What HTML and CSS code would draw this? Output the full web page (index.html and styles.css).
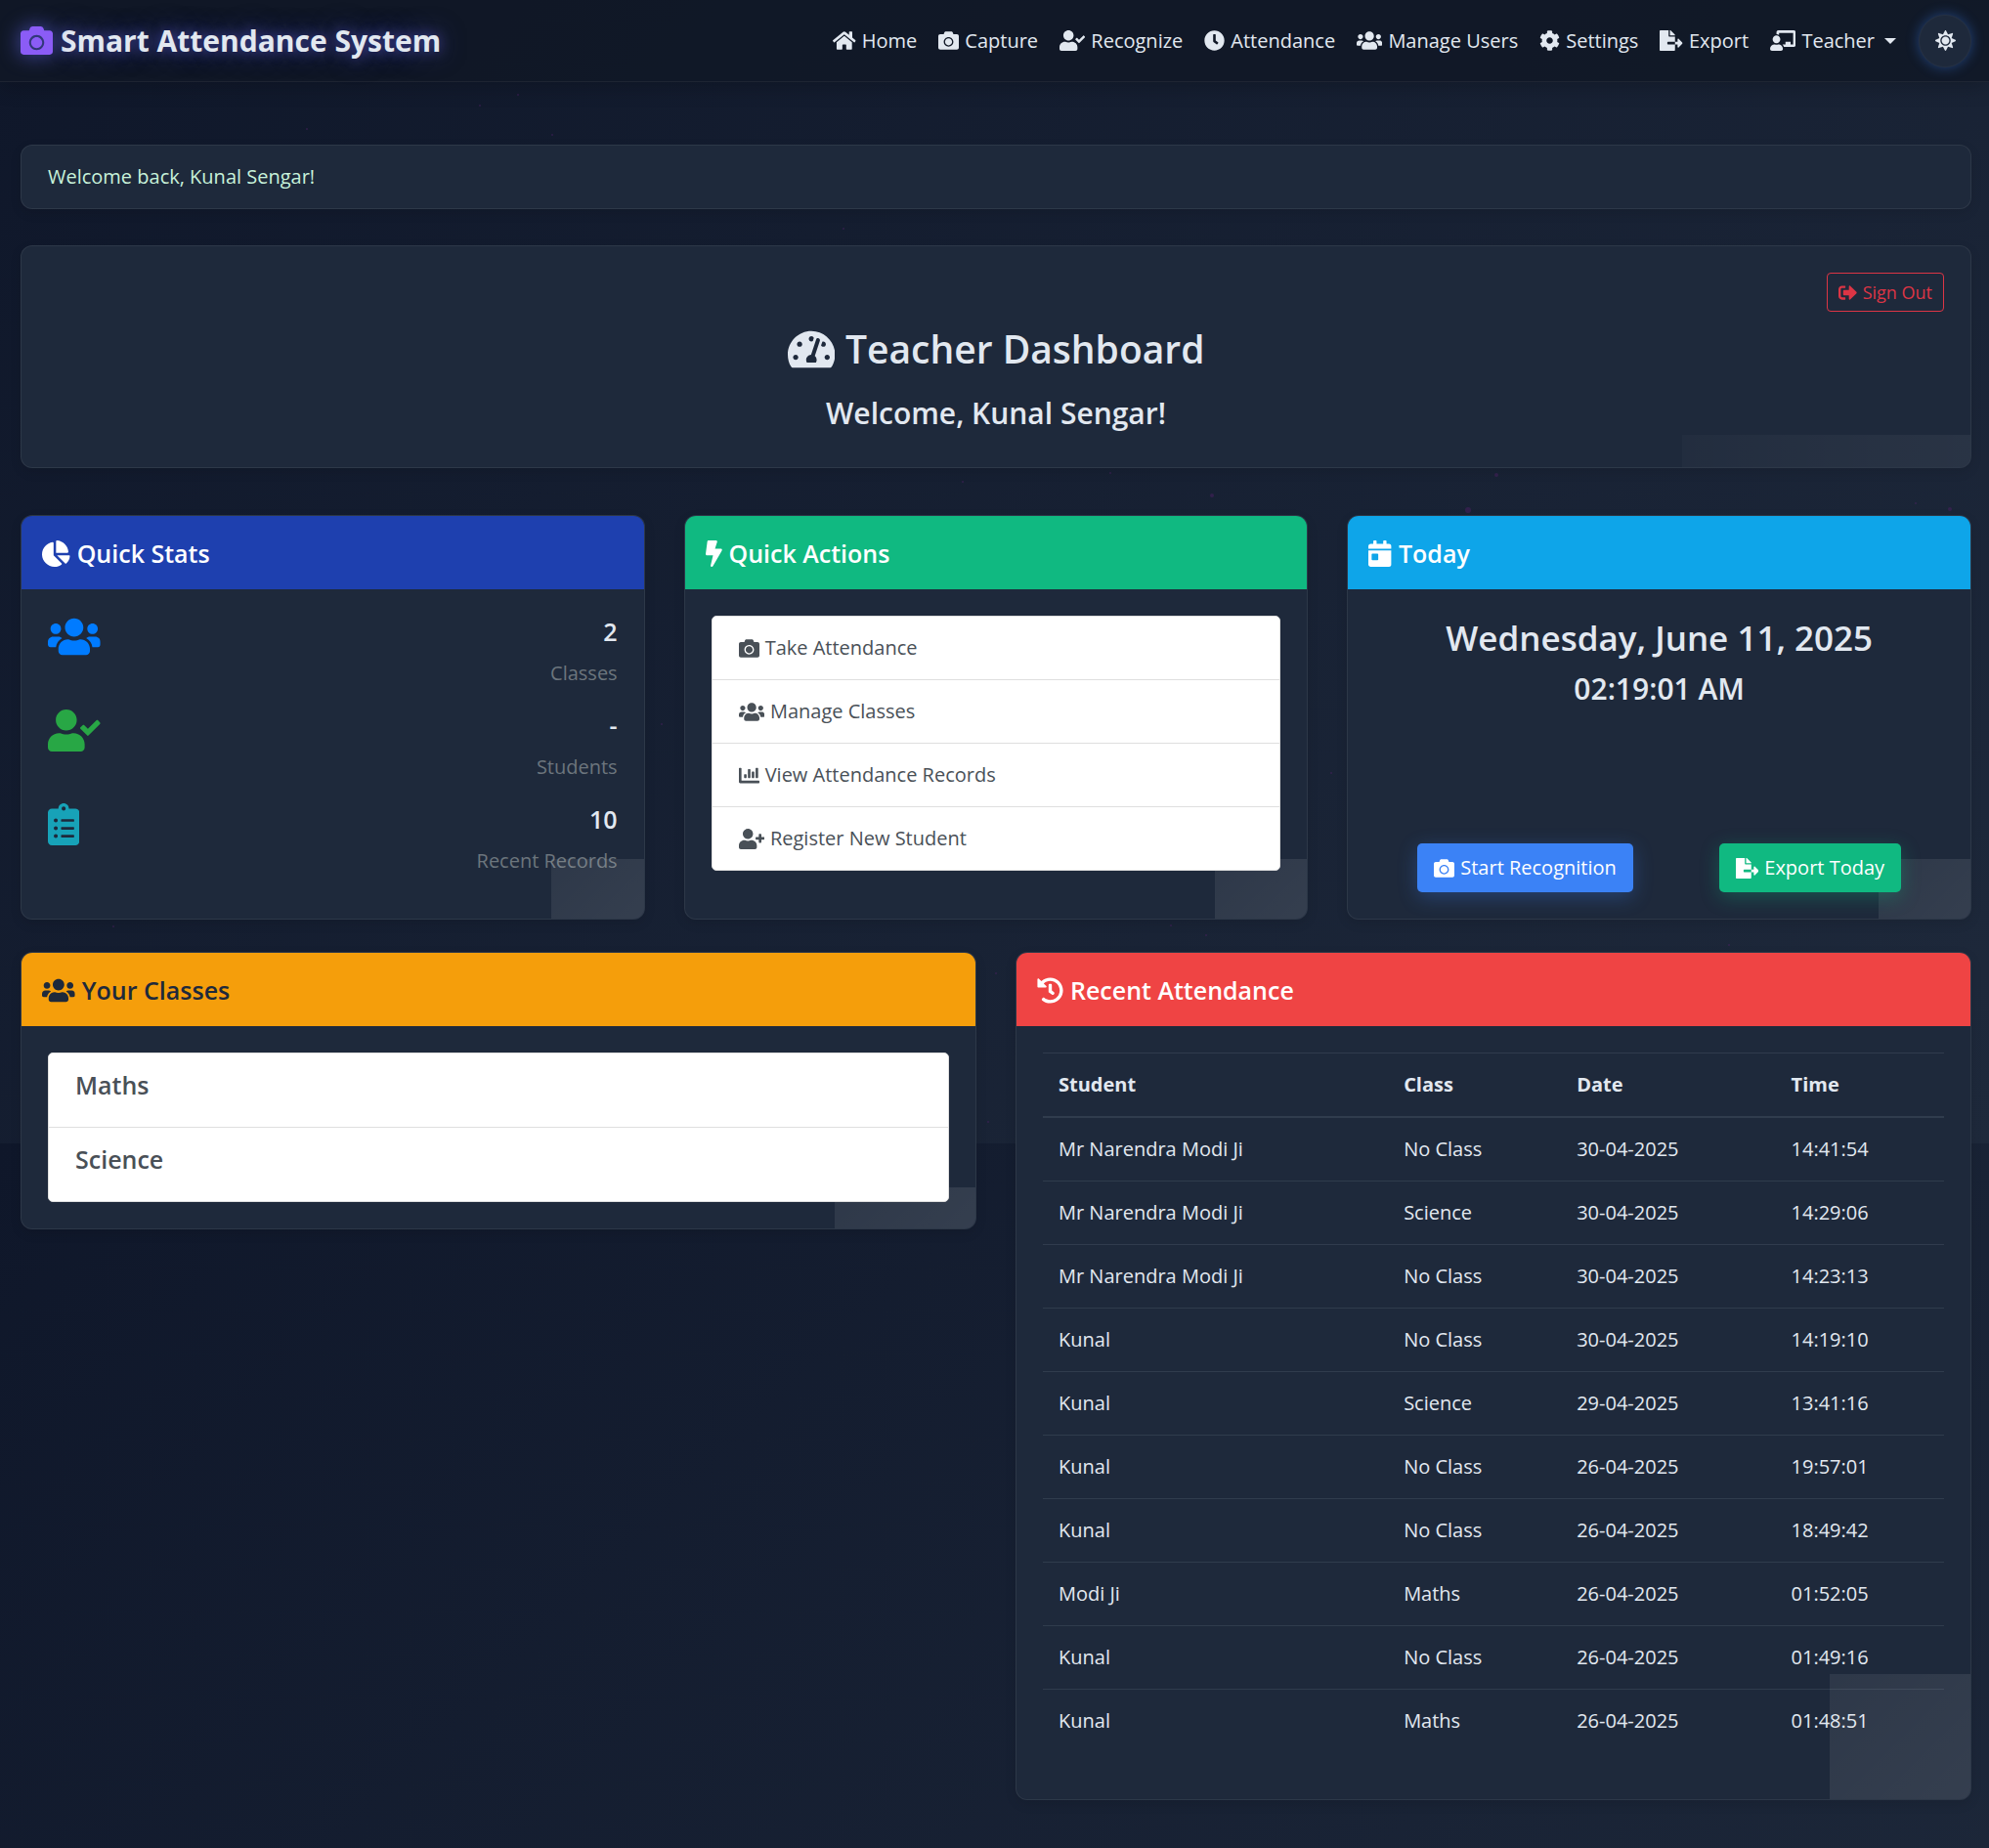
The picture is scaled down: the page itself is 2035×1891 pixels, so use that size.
FILE: index.html
```html
<!DOCTYPE html>
<html lang="en">
<head>
<meta charset="utf-8">
<meta name="viewport" content="width=device-width, initial-scale=1">
<title>Smart Attendance System</title>
<link rel="stylesheet" href="styles.css">
</head>
<body>
<svg class="sprite" aria-hidden="true">
  <symbol id="camera" viewBox="0 0 512 512"><path d="M512 144v288c0 26.5-21.5 48-48 48H48c-26.5 0-48-21.5-48-48V144c0-26.5 21.5-48 48-48h88l12.3-32.9c7-18.7 24.9-31.1 44.9-31.1h125.5c20 0 37.9 12.4 44.9 31.1L376 96h88c26.5 0 48 21.5 48 48zM376 288c0-66.2-53.8-120-120-120s-120 53.8-120 120 53.8 120 120 120 120-53.8 120-120zm-32 0c0 48.5-39.5 88-88 88s-88-39.5-88-88 39.5-88 88-88 88 39.5 88 88z"/></symbol>
  <symbol id="home" viewBox="0 0 576 512"><path d="M280.37 148.26L96 300.11V464a16 16 0 0 0 16 16l112.06-.29a16 16 0 0 0 15.92-16V368a16 16 0 0 1 16-16h64a16 16 0 0 1 16 16v95.64a16 16 0 0 0 16 16.05L464 480a16 16 0 0 0 16-16V300L295.67 148.26a12.19 12.19 0 0 0-15.3 0zM571.6 251.47L488 182.56V44.05a12 12 0 0 0-12-12h-56a12 12 0 0 0-12 12v72.61L318.47 43a48 48 0 0 0-61 0L4.34 251.47a12 12 0 0 0-1.6 16.9l25.5 31A12 12 0 0 0 45.15 301l235.22-193.74a12.19 12.19 0 0 1 15.3 0L530.9 301a12 12 0 0 0 16.9-1.6l25.5-31a12 12 0 0 0-1.7-16.93z"/></symbol>
  <symbol id="user-check" viewBox="0 0 640 512"><path d="M224 256c70.7 0 128-57.3 128-128S294.7 0 224 0 96 57.3 96 128s57.3 128 128 128zm89.6 32h-16.7c-22.2 10.2-46.9 16-72.9 16s-50.6-5.8-72.9-16h-16.7C60.2 288 0 348.2 0 422.4V464c0 26.5 21.5 48 48 48h352c26.5 0 48-21.5 48-48v-41.6c0-74.2-60.2-134.4-134.4-134.4zm323-128.4l-27.8-28.1c-4.6-4.7-12.1-4.7-16.8-.1l-104.8 104-45.5-45.8c-4.6-4.7-12.1-4.7-16.8-.1l-28.1 27.9c-4.7 4.6-4.7 12.1-.1 16.8l81.7 82.3c4.6 4.7 12.1 4.7 16.8.1l141.3-140.2c4.6-4.7 4.7-12.2.1-16.8z"/></symbol>
  <symbol id="clock" viewBox="0 0 512 512"><path d="M256,8C119,8,8,119,8,256S119,504,256,504,504,393,504,256,393,8,256,8Zm92.49,313h0l-20,25a16,16,0,0,1-22.49,2.5h0l-67-49.72a40,40,0,0,1-15-31.23V112a16,16,0,0,1,16-16h32a16,16,0,0,1,16,16V256l58,42.5A16,16,0,0,1,348.49,321Z"/></symbol>
  <symbol id="users" viewBox="0 0 640 512"><path d="M96 224c35.3 0 64-28.7 64-64s-28.7-64-64-64-64 28.7-64 64 28.7 64 64 64zm448 0c35.3 0 64-28.7 64-64s-28.7-64-64-64-64 28.7-64 64 28.7 64 64 64zm32 32h-64c-17.6 0-33.5 7.1-45.1 18.6 40.3 22.1 68.9 62 75.1 109.4h66c17.7 0 32-14.3 32-32v-32c0-35.3-28.7-64-64-64zm-256 0c61.9 0 112-50.1 112-112S381.9 32 320 32 208 82.1 208 144s50.1 112 112 112zm76.8 32h-8.3c-20.8 10-43.9 16-68.5 16s-47.6-6-68.5-16h-8.3C179.6 288 128 339.6 128 403.2V432c0 26.5 21.5 48 48 48h288c26.5 0 48-21.5 48-48v-28.8c0-63.6-51.6-115.2-115.2-115.2zm-223.7-13.4C161.5 263.1 145.6 256 128 256H64c-35.3 0-64 28.7-64 64v32c0 17.7 14.3 32 32 32h65.9c6.3-47.4 34.9-87.3 75.2-109.4z"/></symbol>
  <symbol id="cog" viewBox="0 0 512 512"><path d="M487.4 315.7l-42.6-24.6c4.3-23.2 4.3-47 0-70.2l42.6-24.6c4.9-2.8 7.1-8.6 5.5-14-11.1-35.6-30-67.8-54.7-94.6-3.8-4.1-10-5.1-14.8-2.3L380.8 110c-17.9-15.4-38.5-27.3-60.8-35.1V25.8c0-5.6-3.9-10.5-9.4-11.7-36.7-8.2-74.3-7.8-109.2 0-5.5 1.2-9.4 6.1-9.4 11.7V75c-22.2 7.9-42.8 19.8-60.8 35.1L88.7 85.5c-4.9-2.8-11-1.9-14.8 2.3-24.7 26.7-43.6 58.9-54.7 94.6-1.7 5.4.6 11.2 5.5 14L67.3 221c-4.3 23.2-4.3 47 0 70.2l-42.6 24.6c-4.9 2.8-7.1 8.6-5.5 14 11.1 35.6 30 67.8 54.7 94.6 3.8 4.1 10 5.1 14.8 2.3l42.6-24.6c17.9 15.4 38.5 27.3 60.8 35.1v49.2c0 5.6 3.9 10.5 9.4 11.7 36.7 8.2 74.3 7.8 109.2 0 5.5-1.2 9.4-6.1 9.4-11.7v-49.2c22.2-7.9 42.8-19.8 60.8-35.1l42.6 24.6c4.9 2.8 11 1.9 14.8-2.3 24.7-26.7 43.6-58.9 54.7-94.6 1.5-5.5-.7-11.3-5.6-14.1zM256 336c-44.1 0-80-35.9-80-80s35.9-80 80-80 80 35.9 80 80-35.9 80-80 80z"/></symbol>
  <symbol id="export" viewBox="0 0 576 512"><path d="M384 121.9c0-6.3-2.5-12.4-7-16.9L279.1 7c-4.5-4.5-10.6-7-17-7H256v128h128zM571 308l-95.7-96.4c-10.1-10.1-27.4-3-27.4 11.3V288h-64v64h64v65.2c0 14.3 17.3 21.4 27.4 11.3L571 332c6.6-6.6 6.6-17.4 0-24zm-379 28v-32c0-8.8 7.2-16 16-16h176V160H248c-13.2 0-24-10.8-24-24V0H24C10.7 0 0 10.7 0 24v464c0 13.3 10.7 24 24 24h336c13.3 0 24-10.7 24-24V352H208c-8.8 0-16-7.2-16-16z"/></symbol>
  <symbol id="teacher" viewBox="0 0 640 512"><path d="M208 352c-2.39 0-4.78.35-7.06 1.09C187.98 357.3 174.35 360 160 360c-14.35 0-27.98-2.7-40.95-6.91-2.28-.74-4.66-1.09-7.05-1.09C49.94 352-.33 402.48 0 464.62.14 490.88 21.73 512 48 512h224c26.27 0 47.86-21.12 48-47.38.33-62.14-49.94-112.62-112-112.62zm-48-32c53.02 0 96-42.98 96-96s-42.98-96-96-96-96 42.98-96 96 42.98 96 96 96zM592 0H208c-26.47 0-48 22.25-48 49.59V96c23.42 0 45.1 6.78 64 17.8V64h352v288h-64v-64H384v64h-76.24c19.1 16.69 33.12 38.73 39.69 64H592c26.47 0 48-22.25 48-49.59V49.59C640 22.25 618.47 0 592 0z"/></symbol>
  <symbol id="sun" viewBox="0 0 512 512"><path d="M256 160c-52.9 0-96 43.1-96 96s43.1 96 96 96 96-43.1 96-96-43.1-96-96-96zm246.4 80.5l-94.7-47.3 33.5-100.4c4.5-13.6-8.4-26.5-21.9-21.9l-100.4 33.5-47.4-94.8c-6.4-12.8-24.6-12.8-31 0l-47.3 94.7L92.7 70.8c-13.6-4.5-26.5 8.4-21.9 21.9l33.5 100.4-94.7 47.4c-12.8 6.4-12.8 24.6 0 31l94.7 47.3-33.5 100.5c-4.5 13.6 8.4 26.5 21.9 21.9l100.4-33.5 47.3 94.7c6.4 12.8 24.6 12.8 31 0l47.3-94.7 100.4 33.5c13.6 4.5 26.5-8.4 21.9-21.9l-33.5-100.4 94.7-47.3c13-6.5 13-24.7.2-31.1zm-155.9 106c-49.9 49.9-131.1 49.9-181 0-49.9-49.9-49.9-131.1 0-181 49.9-49.9 131.1-49.9 181 0 49.9 49.9 49.9 131.1 0 181z"/></symbol>
  <symbol id="gauge" viewBox="0 0 576 512"><path d="M288 32C128.94 32 0 160.94 0 320c0 52.8 14.25 102.26 39.06 144.8 5.61 9.62 16.3 15.2 27.44 15.2h443c11.14 0 21.83-5.58 27.44-15.2C561.75 422.26 576 372.8 576 320c0-159.06-128.94-288-288-288zm0 64c14.71 0 26.58 10.13 30.32 23.65-1.11 2.26-2.64 4.23-3.45 6.67l-9.22 27.67c-5.13 3.49-10.97 6.01-17.64 6.01-17.67 0-32-14.33-32-32S270.33 96 288 96zM96 384c-17.67 0-32-14.33-32-32s14.33-32 32-32 32 14.33 32 32-14.33 32-32 32zm48-160c-17.67 0-32-14.33-32-32s14.33-32 32-32 32 14.33 32 32-14.33 32-32 32zm246.77-72.41l-61.33 184C343.13 347.33 352 364.54 352 384c0 11.72-3.38 22.55-8.88 32H232.88c-5.5-9.45-8.88-20.28-8.88-32 0-33.94 26.5-61.43 59.9-63.59l61.34-184.01c4.17-12.56 17.73-19.45 30.36-15.17 12.57 4.19 19.35 17.79 15.17 30.36zm14.66 57.2l15.52-46.55c3.47-1.29 7.13-2.23 11.05-2.23 17.67 0 32 14.33 32 32s-14.33 32-32 32c-11.38-.01-20.89-6.28-26.57-15.22zM480 384c-17.67 0-32-14.33-32-32s14.33-32 32-32 32 14.33 32 32-14.33 32-32 32z"/></symbol>
  <symbol id="sign-out" viewBox="0 0 512 512"><path d="M497 273L329 441c-15 15-41 4.5-41-17v-96H152c-13.3 0-24-10.7-24-24v-96c0-13.3 10.7-24 24-24h136V88c0-21.4 25.9-32 41-17l168 168c9.3 9.4 9.3 24.6 0 34zM192 436v-40c0-6.6-5.4-12-12-12H96c-17.7 0-32-14.3-32-32V160c0-17.7 14.3-32 32-32h84c6.6 0 12-5.4 12-12V76c0-6.6-5.4-12-12-12H96c-53 0-96 43-96 96v192c0 53 43 96 96 96h84c6.6 0 12-5.4 12-12z"/></symbol>
  <symbol id="pie" viewBox="0 0 544 512"><path d="M527.79 288H290.5l158.03 158.03c6.04 6.04 15.98 6.53 22.19.68 38.7-36.46 65.32-85.61 73.13-140.86 1.34-9.46-6.51-17.85-16.06-17.85zm-15.83-64.8C503.72 103.74 408.26 8.28 288.8.04 279.68-.59 272 7.1 272 16.24V240h223.77c9.14 0 16.82-7.68 16.19-16.8zM224 288V50.71c0-9.55-8.39-17.4-17.84-16.06C86.99 51.49-4.1 155.6.14 280.37 4.5 408.51 114.83 513.59 243.03 511.98c50.4-.63 96.97-16.87 135.26-44.03 7.9-5.6 8.42-17.23 1.57-24.08L224 288z"/></symbol>
  <symbol id="bolt" viewBox="0 0 320 512"><path d="M296 160H180.6l42.6-129.8C227.2 15 215.7 0 200 0H56C44 0 33.8 8.9 32.2 20.8l-32 240C-1.7 275.2 9.5 288 24 288h118.7L96.6 482.5c-3.6 15.2 8 29.5 23.3 29.5 8.4 0 16.4-4.4 20.8-12l176-304c9.3-15.9-2.2-36-20.7-36z"/></symbol>
  <symbol id="calendar" viewBox="0 0 448 512"><path d="M0 464c0 26.5 21.5 48 48 48h352c26.5 0 48-21.5 48-48V192H0v272zm64-192c0-8.8 7.2-16 16-16h96c8.8 0 16 7.2 16 16v96c0 8.8-7.2 16-16 16H80c-8.8 0-16-7.2-16-16v-96zM400 64h-48V16c0-8.8-7.2-16-16-16h-32c-8.8 0-16 7.2-16 16v48H160V16c0-8.8-7.2-16-16-16h-32c-8.8 0-16 7.2-16 16v48H48C21.5 64 0 85.5 0 112v48h448v-48c0-26.5-21.5-48-48-48z"/></symbol>
  <symbol id="clipboard" viewBox="0 0 384 512"><path d="M336 64h-80c0-35.3-28.7-64-64-64s-64 28.7-64 64H48C21.5 64 0 85.5 0 112v352c0 26.5 21.5 48 48 48h288c26.5 0 48-21.5 48-48V112c0-26.5-21.5-48-48-48zM96 424c-13.3 0-24-10.7-24-24s10.7-24 24-24 24 10.7 24 24-10.7 24-24 24zm0-96c-13.3 0-24-10.7-24-24s10.7-24 24-24 24 10.7 24 24-10.7 24-24 24zm0-96c-13.3 0-24-10.7-24-24s10.7-24 24-24 24 10.7 24 24-10.7 24-24 24zm96-192c13.3 0 24 10.7 24 24s-10.7 24-24 24-24-10.7-24-24 10.7-24 24-24zm128 368c0 4.4-3.6 8-8 8H168c-4.4 0-8-3.6-8-8v-16c0-4.4 3.6-8 8-8h144c4.4 0 8 3.6 8 8v16zm0-96c0 4.4-3.6 8-8 8H168c-4.4 0-8-3.6-8-8v-16c0-4.4 3.6-8 8-8h144c4.4 0 8 3.6 8 8v16zm0-96c0 4.4-3.6 8-8 8H168c-4.4 0-8-3.6-8-8v-16c0-4.4 3.6-8 8-8h144c4.4 0 8 3.6 8 8v16z"/></symbol>
  <symbol id="chart" viewBox="0 0 512 512"><path d="M332.8 320h38.4c6.4 0 12.8-6.4 12.8-12.8V172.8c0-6.4-6.4-12.8-12.8-12.8h-38.4c-6.4 0-12.8 6.4-12.8 12.8v134.4c0 6.4 6.4 12.8 12.8 12.8zm96 0h38.4c6.4 0 12.8-6.4 12.8-12.8V76.8c0-6.4-6.4-12.8-12.8-12.8h-38.4c-6.4 0-12.8 6.4-12.8 12.8v230.4c0 6.4 6.4 12.8 12.8 12.8zm-288 0h38.4c6.4 0 12.8-6.4 12.8-12.8v-70.4c0-6.4-6.4-12.8-12.8-12.8h-38.4c-6.4 0-12.8 6.4-12.8 12.8v70.4c0 6.4 6.4 12.8 12.8 12.8zm96 0h38.4c6.4 0 12.8-6.4 12.8-12.8V108.8c0-6.4-6.4-12.8-12.8-12.8h-38.4c-6.4 0-12.8 6.4-12.8 12.8v198.4c0 6.4 6.4 12.8 12.8 12.8zM496 384H64V80c0-8.84-7.16-16-16-16H16C7.16 64 0 71.16 0 80v336c0 17.67 14.33 32 32 32h464c8.84 0 16-7.16 16-16v-32c0-8.84-7.16-16-16-16z"/></symbol>
  <symbol id="user-plus" viewBox="0 0 640 512"><path d="M624 208h-64v-64c0-8.8-7.2-16-16-16h-32c-8.8 0-16 7.2-16 16v64h-64c-8.8 0-16 7.2-16 16v32c0 8.8 7.2 16 16 16h64v64c0 8.8 7.2 16 16 16h32c8.8 0 16-7.2 16-16v-64h64c8.8 0 16-7.2 16-16v-32c0-8.8-7.2-16-16-16zm-400 48c70.7 0 128-57.3 128-128S294.7 0 224 0 96 57.3 96 128s57.3 128 128 128zm89.6 32h-16.7c-22.2 10.2-46.9 16-72.9 16s-50.6-5.8-72.9-16h-16.7C60.2 288 0 348.2 0 422.4V464c0 26.5 21.5 48 48 48h352c26.5 0 48-21.5 48-48v-41.6c0-74.2-60.2-134.4-134.4-134.4z"/></symbol>
  <symbol id="history" viewBox="0 0 512 512"><path d="M504 255.531c.253 136.64-111.18 248.372-247.82 248.468-59.015.042-113.223-20.53-155.822-54.911-11.077-8.94-11.905-25.541-1.839-35.607l11.267-11.267c8.609-8.609 22.353-9.551 31.891-1.984C173.062 425.135 212.781 440 256 440c101.705 0 184-82.311 184-184 0-101.705-82.311-184-184-184-48.814 0-93.149 18.969-126.068 49.932l50.754 50.754c10.08 10.08 2.941 27.314-11.313 27.314H24c-8.837 0-16-7.163-16-16V38.627c0-14.254 17.234-21.393 27.314-11.314l49.372 49.372C129.209 34.136 189.552 8 256 8c136.81 0 247.747 110.78 248 247.531zm-180.912 78.784l9.823-12.63c8.138-10.463 6.253-25.542-4.21-33.679L288 256.349V152c0-13.255-10.745-24-24-24h-16c-13.255 0-24 10.745-24 24v135.651l65.409 50.874c10.463 8.137 25.541 6.253 33.679-4.21z"/></symbol>
</svg>

<svg class="particles" aria-hidden="true">
  <circle cx="314" cy="132" r="1"/><circle cx="491" cy="108" r="1"/><circle cx="565" cy="138" r="1"/>
  <circle cx="863" cy="234" r="1"/><circle cx="530" cy="97" r="1"/><circle cx="985" cy="493" r="1"/>
  <circle cx="1136" cy="484" r="1"/><circle cx="1240" cy="507" r="2"/><circle cx="1531" cy="486" r="2"/>
  <circle cx="1502" cy="522" r="3"/><circle cx="1995" cy="521" r="2"/><circle cx="1960" cy="515" r="1"/>
  <circle cx="677" cy="741" r="1"/><circle cx="116" cy="948" r="1"/><circle cx="1198" cy="947" r="1"/>
  <circle cx="1234" cy="957" r="1"/><circle cx="1769" cy="967" r="1"/><circle cx="1019" cy="996" r="1"/>
  <circle cx="1011" cy="1148" r="1"/><circle cx="1362" cy="791" r="1"/>
</svg>

<header class="navbar">
  <a class="brand" href="#"><svg class="icon i-512 brand-icon"><use href="#camera"/></svg>Smart Attendance System</a>
  <nav class="nav" aria-label="Main">
    <a class="nav-link" href="#"><svg class="icon i-576"><use href="#home"/></svg>Home</a>
    <a class="nav-link" href="#"><svg class="icon i-512"><use href="#camera"/></svg>Capture</a>
    <a class="nav-link" href="#"><svg class="icon i-640"><use href="#user-check"/></svg>Recognize</a>
    <a class="nav-link" href="#"><svg class="icon i-512"><use href="#clock"/></svg>Attendance</a>
    <a class="nav-link" href="#"><svg class="icon i-640"><use href="#users"/></svg>Manage Users</a>
    <a class="nav-link" href="#"><svg class="icon i-512"><use href="#cog"/></svg>Settings</a>
    <a class="nav-link" href="#"><svg class="icon i-576"><use href="#export"/></svg>Export</a>
    <button class="nav-link dropdown" type="button" aria-haspopup="true"><svg class="icon i-640"><use href="#teacher"/></svg>Teacher</button>
    <button class="theme-toggle" type="button" aria-label="Toggle theme"><svg class="icon i-512"><use href="#sun"/></svg></button>
  </nav>
</header>

<main class="page">
  <div class="alert panel" role="status">Welcome back, Kunal Sengar!</div>

  <section class="hero panel shine">
    <button class="sign-out" type="button"><svg class="icon i-512"><use href="#sign-out"/></svg>Sign Out</button>
    <h1 class="hero-title"><svg class="icon i-576"><use href="#gauge"/></svg>Teacher Dashboard</h1>
    <h2 class="hero-subtitle">Welcome, Kunal Sengar!</h2>
  </section>

  <div class="row row-thirds">
    <section class="card panel shine">
      <h2 class="card-header blue"><svg class="icon i-544"><use href="#pie"/></svg>Quick Stats</h2>
      <div class="card-body stats">
        <div class="stat">
          <svg class="icon i-640 stat-icon classes"><use href="#users"/></svg>
          <div class="stat-text"><strong>2</strong><span>Classes</span></div>
        </div>
        <div class="stat">
          <svg class="icon i-640 stat-icon students"><use href="#user-check"/></svg>
          <div class="stat-text"><strong>-</strong><span>Students</span></div>
        </div>
        <div class="stat">
          <svg class="icon i-384 stat-icon records"><use href="#clipboard"/></svg>
          <div class="stat-text"><strong>10</strong><span>Recent Records</span></div>
        </div>
      </div>
    </section>

    <section class="card panel shine">
      <h2 class="card-header green"><svg class="icon i-320"><use href="#bolt"/></svg>Quick Actions</h2>
      <div class="card-body">
        <div class="list">
          <a class="list-item" href="#"><svg class="icon i-512"><use href="#camera"/></svg>Take Attendance</a>
          <a class="list-item" href="#"><svg class="icon i-640"><use href="#users"/></svg>Manage Classes</a>
          <a class="list-item" href="#"><svg class="icon i-512"><use href="#chart"/></svg>View Attendance Records</a>
          <a class="list-item" href="#"><svg class="icon i-640"><use href="#user-plus"/></svg>Register New Student</a>
        </div>
      </div>
    </section>

    <section class="card panel shine">
      <h2 class="card-header sky"><svg class="icon i-448"><use href="#calendar"/></svg>Today</h2>
      <div class="card-body today">
        <div class="today-text">
          <p class="today-date">Wednesday, June 11, 2025</p>
          <p class="today-time">02:19:01 AM</p>
        </div>
        <div class="today-actions">
          <button class="btn btn-primary" type="button"><svg class="icon i-512"><use href="#camera"/></svg>Start Recognition</button>
          <button class="btn btn-success" type="button"><svg class="icon i-576"><use href="#export"/></svg>Export Today</button>
        </div>
      </div>
    </section>
  </div>

  <div class="row row-halves">
    <section class="card panel shine">
      <h2 class="card-header amber"><svg class="icon i-640"><use href="#users"/></svg>Your Classes</h2>
      <div class="card-body">
        <div class="list">
          <a class="list-item class-item" href="#">Maths</a>
          <a class="list-item class-item" href="#">Science</a>
        </div>
      </div>
    </section>

    <section class="card panel shine">
      <h2 class="card-header red"><svg class="icon i-512"><use href="#history"/></svg>Recent Attendance</h2>
      <div class="card-body">
        <table class="records-table">
          <colgroup><col class="col-student"><col class="col-class"><col class="col-date"><col class="col-time"></colgroup>
          <thead><tr><th scope="col">Student</th><th scope="col">Class</th><th scope="col">Date</th><th scope="col">Time</th></tr></thead>
          <tbody>
            <tr><td>Mr Narendra Modi Ji</td><td>No Class</td><td>30-04-2025</td><td>14:41:54</td></tr>
            <tr><td>Mr Narendra Modi Ji</td><td>Science</td><td>30-04-2025</td><td>14:29:06</td></tr>
            <tr><td>Mr Narendra Modi Ji</td><td>No Class</td><td>30-04-2025</td><td>14:23:13</td></tr>
            <tr><td>Kunal</td><td>No Class</td><td>30-04-2025</td><td>14:19:10</td></tr>
            <tr><td>Kunal</td><td>Science</td><td>29-04-2025</td><td>13:41:16</td></tr>
            <tr><td>Kunal</td><td>No Class</td><td>26-04-2025</td><td>19:57:01</td></tr>
            <tr><td>Kunal</td><td>No Class</td><td>26-04-2025</td><td>18:49:42</td></tr>
            <tr><td>Modi Ji</td><td>Maths</td><td>26-04-2025</td><td>01:52:05</td></tr>
            <tr><td>Kunal</td><td>No Class</td><td>26-04-2025</td><td>01:49:16</td></tr>
            <tr><td>Kunal</td><td>Maths</td><td>26-04-2025</td><td>01:48:51</td></tr>
          </tbody>
        </table>
      </div>
    </section>
  </div>
</main>
</body>
</html>
```
FILE: styles.css
```css
* { box-sizing: border-box; }

body {
  margin: 0;
  position: relative;
  background: #0f172a linear-gradient(135deg, #0f172a 0%, #1e293b 100%) 0 0 / 100% 1170px repeat-y;
  color: #e2e8f0;
  font-family: "Segoe UI", "Open Sans", "Noto Sans", sans-serif;
  font-size: 20px;
  line-height: 32px;
}

h1, h2, p { margin: 0; font-weight: 600; }
a { color: inherit; text-decoration: none; }
button { font: inherit; color: inherit; cursor: pointer; }

.sprite { position: absolute; width: 0; height: 0; }

.particles {
  position: absolute;
  top: 0;
  left: 0;
  width: 100%;
  height: 100%;
  fill: #4c2063;
  opacity: 0.5;
  z-index: -1;
}

/* Icons: height follows --s, width follows the glyph's own ratio */
.icon {
  --s: 21px;
  flex: none;
  height: var(--s);
  fill: currentColor;
}
.i-320 { width: calc(var(--s) * 0.625); }
.i-384 { width: calc(var(--s) * 0.75); }
.i-448 { width: calc(var(--s) * 0.875); }
.i-512 { width: var(--s); }
.i-544 { width: calc(var(--s) * 1.0625); }
.i-576 { width: calc(var(--s) * 1.125); }
.i-640 { width: calc(var(--s) * 1.25); }

/* Navbar */
.navbar {
  display: flex;
  align-items: center;
  justify-content: space-between;
  min-height: 84px;
  padding: 0 18px 0 21px;
  background: rgba(17, 24, 38, 0.85);
  border-bottom: 1px solid rgba(255, 255, 255, 0.06);
  box-shadow: 0 5px 20px rgba(0, 0, 0, 0.2);
}
.brand {
  display: flex;
  align-items: center;
  gap: 8px;
  font-size: 30px;
  font-weight: 700;
  text-shadow: 0 0 13px rgba(99, 102, 241, 0.5), 0 0 27px rgba(99, 102, 241, 0.5);
}
.brand-icon {
  --s: 33px;
  color: #8b5cf6;
  filter: drop-shadow(0 0 10px rgba(99, 102, 241, 0.7));
}
.nav { display: flex; align-items: center; }
.nav-link {
  display: flex;
  align-items: center;
  gap: 6px;
  padding: 11px;
  border: 0;
  background: none;
}
.dropdown::after {
  content: "";
  margin-left: 4px;
  border: 6px solid transparent;
  border-top-color: currentColor;
  border-bottom: 0;
}
.theme-toggle {
  display: grid;
  place-items: center;
  width: 54px;
  height: 54px;
  margin-left: 12px;
  border: 1px solid rgba(255, 255, 255, 0.04);
  border-radius: 50%;
  background: #1e293b;
  box-shadow: 0 0 13px rgba(59, 130, 246, 0.4);
}

/* Page */
.page { padding: 64px 18px 51px 21px; }
.panel {
  position: relative;
  background: #1e293b;
  border: 1px solid rgba(255, 255, 255, 0.07);
  border-radius: 12px;
  box-shadow: 0 4px 12px rgba(0, 0, 0, 0.1);
}
.shine { overflow: hidden; }
.shine::after {
  content: "";
  position: absolute;
  right: 0;
  bottom: 0;
  width: 14.8%;
  height: 14.8%;
  background: linear-gradient(135deg, rgba(255, 255, 255, 0.07), rgba(255, 255, 255, 0.1));
  pointer-events: none;
}

.alert {
  margin-bottom: 37px;
  padding: 16px 27px;
  color: #c8f2da;
}

.hero {
  display: flex;
  flex-direction: column;
  align-items: center;
  margin-bottom: 48px;
  padding: 27px 27px 36px;
}
.hero::after { background: linear-gradient(90deg, rgba(255, 255, 255, 0.02), rgba(255, 255, 255, 0.05)); }
.sign-out {
  display: flex;
  align-items: center;
  align-self: flex-end;
  gap: 6px;
  padding: 4px 11px;
  border: 1px solid #dc3545;
  border-radius: 4px;
  background: none;
  color: #dc3545;
  font-size: 18px;
  line-height: 30px;
}
.sign-out .icon { --s: 19px; }
.hero-title {
  display: flex;
  align-items: center;
  gap: 11px;
  margin-top: 12px;
  font-size: 39px;
  line-height: 52px;
}
.hero-title .icon { --s: 43px; }
.hero-subtitle {
  margin-top: 21px;
  font-size: 30px;
  line-height: 38px;
}

.row {
  display: grid;
  gap: 40px;
  align-items: start;
}
.row-thirds {
  grid-template-columns: repeat(3, minmax(0, 1fr));
  align-items: stretch;
  margin-bottom: 33px;
}
.row-halves { grid-template-columns: repeat(2, minmax(0, 1fr)); }

/* Cards */
.card { display: flex; flex-direction: column; }
.card-header {
  display: flex;
  align-items: center;
  gap: 7px;
  padding: 22px 21px 21px;
  color: #fff;
  font-size: 25px;
}
.card-header .icon { --s: 27px; }
.blue { background: #1e40af; }
.green { background: #10b981; }
.sky { background: #0ea5e9; }
.amber { background: #f59e0b; color: #1e293b; }
.red { background: #ef4444; }
.card-body {
  display: flex;
  flex: 1;
  flex-direction: column;
  padding: 27px;
}

/* Quick stats */
.stats { gap: 21px; padding-bottom: 43px; }
.stat {
  display: flex;
  justify-content: space-between;
}
.stat-icon { --s: 43px; }
.classes { color: #007bff; }
.students { color: #28a745; }
.records { color: #17a2b8; }
.stat-text {
  display: flex;
  flex-direction: column;
  gap: 11px;
  text-align: right;
}
.stat-text strong { font-size: 25px; font-weight: 600; }
.stat-text span { color: #6c757d; }

/* Lists */
.list {
  position: relative;
  z-index: 1;
  border: 1px solid #dfdfdf;
  border-radius: 5px;
  background: #fff;
  color: #495057;
}
.list-item {
  display: flex;
  align-items: center;
  gap: 6px;
  padding: 16px 27px;
}
.list-item + .list-item { border-top: 1px solid #dfdfdf; }
.class-item {
  padding: 16px 27px 27px;
  font-size: 25px;
  font-weight: 600;
}

/* Today */
.today { justify-content: space-between; }
.today-text { text-align: center; }
.today-date {
  font-size: 35px;
  line-height: 45px;
}
.today-time {
  margin-top: 11px;
  font-size: 30px;
  line-height: 38px;
}
.today-actions {
  position: relative;
  z-index: 1;
  display: flex;
  justify-content: space-around;
}
.btn {
  display: flex;
  align-items: center;
  gap: 6px;
  padding: 9px 17px;
  border: 0;
  border-radius: 5px;
  color: #fff;
}
.btn-primary {
  background: #3b82f6;
  box-shadow: 0 5px 20px rgba(59, 130, 246, 0.3);
}
.btn-success {
  background: #10b981;
  box-shadow: 0 5px 20px rgba(16, 185, 129, 0.3);
}

/* Attendance table */
.records-table {
  width: 100%;
  margin-bottom: 21px;
  border-collapse: separate;
  border-spacing: 0;
  table-layout: fixed;
}
.col-student { width: 38.3%; }
.col-class { width: 19.2%; }
.col-date { width: 23.8%; }
.records-table th,
.records-table td {
  padding: 16px;
  border-top: 1px solid #303c4d;
  text-align: left;
}
.records-table th {
  border-bottom: 2px solid #303c4d;
  font-weight: 700;
}
.records-table tbody tr:first-child td { border-top: 0; }
```
